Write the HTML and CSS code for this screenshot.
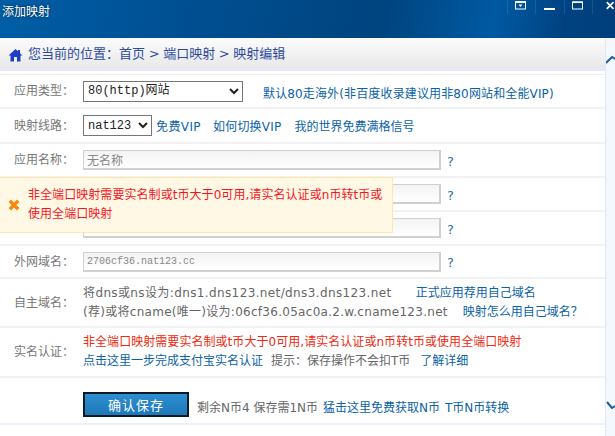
FILE: index.html
```html
<!DOCTYPE html>
<html lang="zh">
<head>
<meta charset="utf-8">
<title>添加映射</title>
<link rel="stylesheet" href="styles.css">
</head>
<body>
<header class="titlebar">
  <span class="title">添加映射</span>
  <div class="controls">
    <span class="ctl"><svg width="12" height="9" viewBox="0 0 12 9"><rect x=".5" y=".5" width="10" height="7.5" fill="none" stroke="#fff"/><path d="M0 0h11v2H0z" fill="#fff"/><path d="M3.5 3.5h4L5.5 6z" fill="#fff"/></svg></span>
    <span class="ctl"><svg width="12" height="9" viewBox="0 0 12 9"><path d="M0 7h11v2H0z" fill="#fff"/></svg></span>
    <span class="ctl"><svg width="12" height="9" viewBox="0 0 12 9"><rect x=".5" y="1" width="10" height="7" fill="none" stroke="#fff"/><path d="M0 .5h11v1.500H0z" fill="#fff"/></svg></span>
    <span class="ctl ctl-close"><svg width="12" height="11" viewBox="0 0 12 11"><path d="M1 1l9 9M10 1l-9 9" stroke="#fff" stroke-width="2.200" fill="none"/></svg></span>
  </div>
</header>
<div class="page">
  <main class="main">
    <nav class="crumb">
      <svg class="home" width="15" height="14" viewBox="0 0 15 14"><path d="M7.500 1L0.500 7.500h2V13.500h3.500V9h3v4.500h3.500V7.500h2L12 5.200V2h-2v1.300z" fill="#1f3fc4"/></svg>
      <span>您当前的位置：首页 &gt; 端口映射 &gt; 映射编辑</span>
    </nav>
    <div class="crumb-line"></div>
    <form class="rows">
      <div class="row row-a">
        <label class="lab">应用类型：</label>
        <select class="sel sel-wide"><option>80(http)网站</option></select>
        <a class="link link-type">默认80走海外(非百度收录建议用非80网站和全能VIP)</a>
      </div>
      <div class="row row-b">
        <label class="lab">映射线路：</label>
        <select class="sel sel-small"><option>nat123</option></select>
        <a class="link link-a">免费VIP</a>
        <a class="link link-b">如何切换VIP</a>
        <a class="link link-c">我的世界免费满格信号</a>
      </div>
      <div class="row row-c">
        <label class="lab">应用名称：</label>
        <input class="inp inp-cjk" value="无名称">
        <a class="q">?</a>
      </div>
      <div class="row row-c">
        <span class="lab"></span>
        <input class="inp">
        <a class="q">?</a>
      </div>
      <div class="row row-c">
        <span class="lab"></span>
        <input class="inp">
        <a class="q">?</a>
      </div>
      <div class="row row-d">
        <label class="lab">外网域名：</label>
        <input class="inp inp-mono" value="2706cf36.nat123.cc">
        <a class="q">?</a>
      </div>
      <div class="row row-e">
        <label class="lab">自主域名：</label>
        <div class="stack">
          <p class="line"><span class="txt dns-a">将dns或ns设为:dns1.dns123.net/dns3.dns123.net</span><a class="link gap-1">正式应用荐用自己域名</a></p>
          <p class="line"><span class="txt dns-b">(荐)或将cname(唯一)设为:06cf36.05ac0a.2.w.cname123.net</span><a class="link gap-2">映射怎么用自己域名？</a></p>
        </div>
      </div>
      <div class="row row-f">
        <label class="lab">实名认证：</label>
        <div class="stack">
          <p class="line red">非全端口映射需要实名制或t币大于0可用,请实名认证或n币转t币或使用全端口映射</p>
          <p class="line"><a class="link">点击这里一步完成支付宝实名认证</a><span class="txt tip">提示：保存操作不会扣T币</span><a class="link">了解详细</a></p>
        </div>
      </div>
      <div class="row row-g">
        <button class="save" type="button">确认保存</button>
        <p class="line save-info"><span class="txt">剩余N币4 保存需1N币</span><a class="link">猛击这里免费获取N币</a><a class="link">T币N币转换</a></p>
      </div>
    </form>
    <div class="toast">
      <svg class="toast-x" width="12" height="12" viewBox="0 0 12 12"><path d="M1.800 1.800l8.400 8.400M10.200 1.800l-8.400 8.400" stroke="#f58a12" stroke-width="3.400" fill="none"/></svg>
      <p class="toast-msg">非全端口映射需要实名制或t币大于0可用,请实名认证或n币转t币或使用全端口映射</p>
    </div>
  </main>
  <aside class="strip">
    <svg class="arrow-up" width="9" height="9" viewBox="0 0 9 9"><path d="M0 8L6 2l3 2" fill="none" stroke="#1d5f96" stroke-width="2"/></svg>
    <svg class="arrow-down" width="9" height="9" viewBox="0 0 9 9"><path d="M1 1l5 6 3-2" fill="none" stroke="#1d5f96" stroke-width="2"/></svg>
  </aside>
</div>
</body>
</html>
```
FILE: styles.css
```css
* { box-sizing: border-box; }
html, body { margin: 0; height: 100%; }
body {
  width: 615px;
  height: 436px;
  overflow: hidden;
  background: #fff;
  font: 12px/20px "DejaVu Sans", "Noto Sans CJK SC", sans-serif;
  color: #666;
}
p { margin: 0; }
a { color: #0a62a8; }

.titlebar {
  height: 38px;
  display: flex;
  justify-content: space-between;
  align-items: flex-start;
  background: linear-gradient(100deg, #005ea6 0, #004f92 30%, #00447f 62%, #005aa2 80%, #004180 92%, #003f7a 100%);
  overflow: hidden;
}
.title {
  margin: 2px 0 0 2px;
  line-height: 20px;
  color: #fff;
  text-shadow: 0 0 3px #00223f;
}
.controls { display: flex; height: 14px; }
.ctl {
  width: 28.500px;
  height: 14px;
  display: flex;
  align-items: center;
  justify-content: center;
  border-left: 1px solid rgba(255, 255, 255, .1);
  padding-bottom: 4px;
}
.ctl-close { width: 23px; justify-content: flex-start; padding-left: 13px; }

.page { display: flex; height: 398px; }
.main { position: relative; width: 306px; flex: 1 0 606px; border-right: 1px solid #e6e6fb; }
.strip { width: 9px; flex: none; background: #f3f7fe; display: flex; flex-direction: column; }
.arrow-up { margin-top: 17px; }
.arrow-down { margin-top: 337px; }

.crumb {
  height: 30px;
  display: flex;
  align-items: center;
  gap: 5px;
  padding: 2px 0 0 8px;
  background: linear-gradient(#fbfbfb, #e9e9e9);
  color: #2d4a9e;
  font-size: 13px;
}
.crumb span { margin-top: -1px; word-spacing: -.5px; }
.home { margin-top: 1px; }
.crumb-line {
  height: 7px;
  background: #fff;
  border-top: 3px solid #e6e6fd;
  border-bottom: 1px solid #eee;
}

.row {
  display: flex;
  align-items: center;
  padding-left: 14px;
  border-bottom: 2px solid #f2f2f2;
}
.row-a { height: 34px; }
.row-b { height: 35px; }
.row-c { height: 34px; }
.row-d { height: 33px; }
.row-e { height: 49px; }
.row-f { height: 50px; }
.row-g {
  height: 47px;
  padding-left: 83px;
  align-items: flex-start;
  border-bottom-color: #eeeefc;
}
.lab { width: 69px; flex: none; color: #777; }

.sel {
  height: 21px;
  padding: 0;
  background: #fff;
  border: 1px solid #767676;
  border-radius: 0;
  font: 12px "Liberation Mono", "Noto Sans CJK SC", monospace;
  color: #222;
}
.sel-wide { width: 160px; }
.sel-small { width: 69px; }
.link-type { margin: 5px 0 0 20px; letter-spacing: .14px; }
.link-a { margin: 3px 0 0 4px; letter-spacing: .4px; }
.link-b { margin: 3px 0 0 12px; letter-spacing: .2px; }
.link-c { margin: 3px 0 0 13px; }

.inp {
  width: 358px;
  height: 20px;
  padding: 0 3px;
  border: 2px solid #d0d0d0;
  border-width: 1px 2px 2px 1px;
  background: linear-gradient(#f3f3f3, #fff);
  font: 12px "Noto Sans CJK SC", sans-serif;
  color: #888;
}
.inp-mono { font: 10px "Liberation Mono", monospace; }
.q { margin: 3px 0 0 6px; font-size: 13px; color: #2a6fb0; }

.stack { display: flex; flex-direction: column; gap: 0; padding-top: 0; }
.line { height: 19px; line-height: 19px; white-space: nowrap; display: flex; }
.txt { color: #666; }
.dns-a { letter-spacing: .38px; }
.dns-b { letter-spacing: .28px; }
.gap-1 { margin-left: 24px; }
.gap-2 { margin-left: 15px; }
.red { color: #f02a10; letter-spacing: .05px; }
.tip { margin: 0 10px 0 8px; }

.save {
  width: 106px;
  height: 25px;
  margin-top: 14px;
  padding: 0;
  border: 2px solid #0b1a26;
  background: linear-gradient(#2c8fd0, #1f78b8);
  color: #fff;
  font: 13px "Noto Sans CJK SC", sans-serif;
  letter-spacing: 1px;
}
.save-info { margin: 21px 0 0 8px; gap: 5px; }

.toast {
  position: absolute;
  left: 0;
  top: 139px;
  width: 393px;
  height: 56px;
  display: flex;
  align-items: center;
  gap: 8px;
  padding-left: 8px;
  background: #fff8e5;
  border: 1px solid #fde8a8;
  border-left: 0;
}
.toast-x { flex: none; }
.toast-msg { width: 358px; color: #f8141e; line-height: 19px; letter-spacing: .06px; }
```
